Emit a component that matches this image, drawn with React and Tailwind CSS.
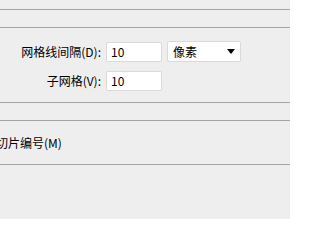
import React from "react";

const font = { fontFamily: '"Noto Sans CJK SC", "Liberation Sans", sans-serif' };

const Field = ({ value, width = "w-[56px]" }) => (
  <div
    className={`${width} h-[20px] bg-white border border-[#dadada] rounded-[2px] flex items-center pl-[4px] text-[12px] text-black`}
  >
    {value}
  </div>
);

const App = () => {
  return (
    <div
      className="w-[290px] h-[219px] bg-[#eeeeee] overflow-hidden flex flex-col text-[12px] text-black"
      style={font}
    >
      <div className="h-[9px]" />
      <div className="h-px bg-[#a3a3a3]" />
      <div className="h-[17px]" />
      <div className="h-px bg-[#a3a3a3]" />

      {/* grid settings */}
      <div className="flex flex-col pt-[13px] pb-[11px] gap-[9px]">
        <div className="flex items-center h-[21px]">
          <div className="w-[101px] text-right leading-none">网格线间隔(D):</div>
          <div className="ml-[5px]">
            <Field value="10" />
          </div>
          <div className="ml-[5px] w-[74px] h-[21px] bg-white border border-[#dadada] rounded-[2px] flex items-center justify-between pl-[5px] pr-[4px]">
            <span>像素</span>
            <svg width="8" height="5" viewBox="0 0 8 5" className="mr-[1px]">
              <path d="M0 0 H8 L4 5 Z" fill="#000" />
            </svg>
          </div>
        </div>
        <div className="flex items-center h-[20px]">
          <div className="w-[101px] text-right leading-none">子网格(V):</div>
          <div className="ml-[5px]">
            <Field value="10" />
          </div>
        </div>
      </div>

      <div className="h-px bg-[#a3a3a3]" />
      <div className="h-[17px]" />
      <div className="h-px bg-[#a3a3a3]" />

      <div className="h-[43px] flex items-center">
        <span className="ml-[-4px] leading-none">切片编号(M)</span>
      </div>
      <div className="h-px bg-[#a3a3a3]" />
    </div>
  );
};

export default App;
